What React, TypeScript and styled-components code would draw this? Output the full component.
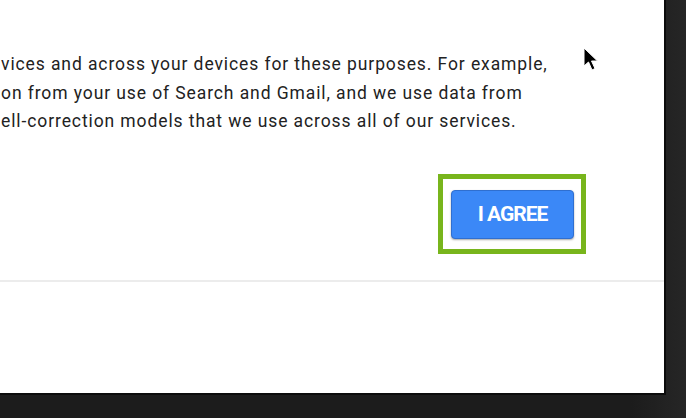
import styled, { createGlobalStyle } from 'styled-components';

const GlobalStyle = createGlobalStyle`
  html, body {
    margin: 0;
    padding: 0;
    background: #1d1d1d;
    width: 686px;
    height: 418px;
    overflow: hidden;
  }
`;

const Screen = styled.div`
  position: relative;
  width: 686px;
  height: 418px;
  background: linear-gradient(90deg, #1c1c1c 0%, #1c1c1c 92%, #262626 100%);
  overflow: hidden;
`;

const Panel = styled.div`
  width: 666px;
  height: 395px;
  box-sizing: border-box;
  background: #fff;
  border-right: 2px solid #0c0c0c;
  border-bottom: 2px solid #0c0c0c;
  display: flex;
  flex-direction: column;
  overflow: hidden;
`;

const Body = styled.div`
  padding: 50px 0 0 1px;
  font-family: Roboto, 'Liberation Sans', sans-serif;
  font-size: 17.5px;
  letter-spacing: 0.9px;
  line-height: 28.5px;
  color: #222;
`;

const Line = styled.div`
  white-space: nowrap;
`;

const Actions = styled.div`
  display: flex;
  justify-content: flex-end;
  padding: 38px 78px 0 0;
  height: 80px;
`;

const Highlight = styled.div`
  width: 148px;
  height: 80px;
  box-sizing: border-box;
  border: 5px solid #78b51c;
  padding: 11px 7px 10px 8px;
  display: flex;
`;

const AgreeButton = styled.button`
  flex: 1;
  border: 1px solid #2f6fd0;
  border-radius: 4px;
  background: #3b88f7;
  box-shadow: 0 1px 2px rgba(0, 0, 0, 0.35);
  color: #fff;
  font-family: Roboto, 'Liberation Sans', sans-serif;
  font-weight: 700;
  font-size: 21px;
  letter-spacing: -1px;
  padding: 0;
  cursor: pointer;
`;

const Divider = styled.hr`
  margin: 26px 0 0;
  border: none;
  border-top: 2px solid #ececec;
`;

const Cursor = styled.svg`
  position: absolute;
  left: 583px;
  top: 47px;
`;

export default function App() {
  return (
    <Screen>
      <GlobalStyle />
      <Panel>
        <Body>
          <Line>vices and across your devices for these purposes. For example,</Line>
          <Line>on from your use of Search and Gmail, and we use data from</Line>
          <Line>ell-correction models that we use across all of our services.</Line>
        </Body>
        <Actions>
          <Highlight>
            <AgreeButton>I AGREE</AgreeButton>
          </Highlight>
        </Actions>
        <Divider />
      </Panel>
      <Cursor width="18" height="26" viewBox="0 0 18 26">
        <path d="M1 1 L1 19 L5.5 15 L9 23 L12 21.5 L8.5 14 L14.5 14 Z" fill="#000" stroke="#fff" strokeWidth="1" />
      </Cursor>
    </Screen>
  );
}
